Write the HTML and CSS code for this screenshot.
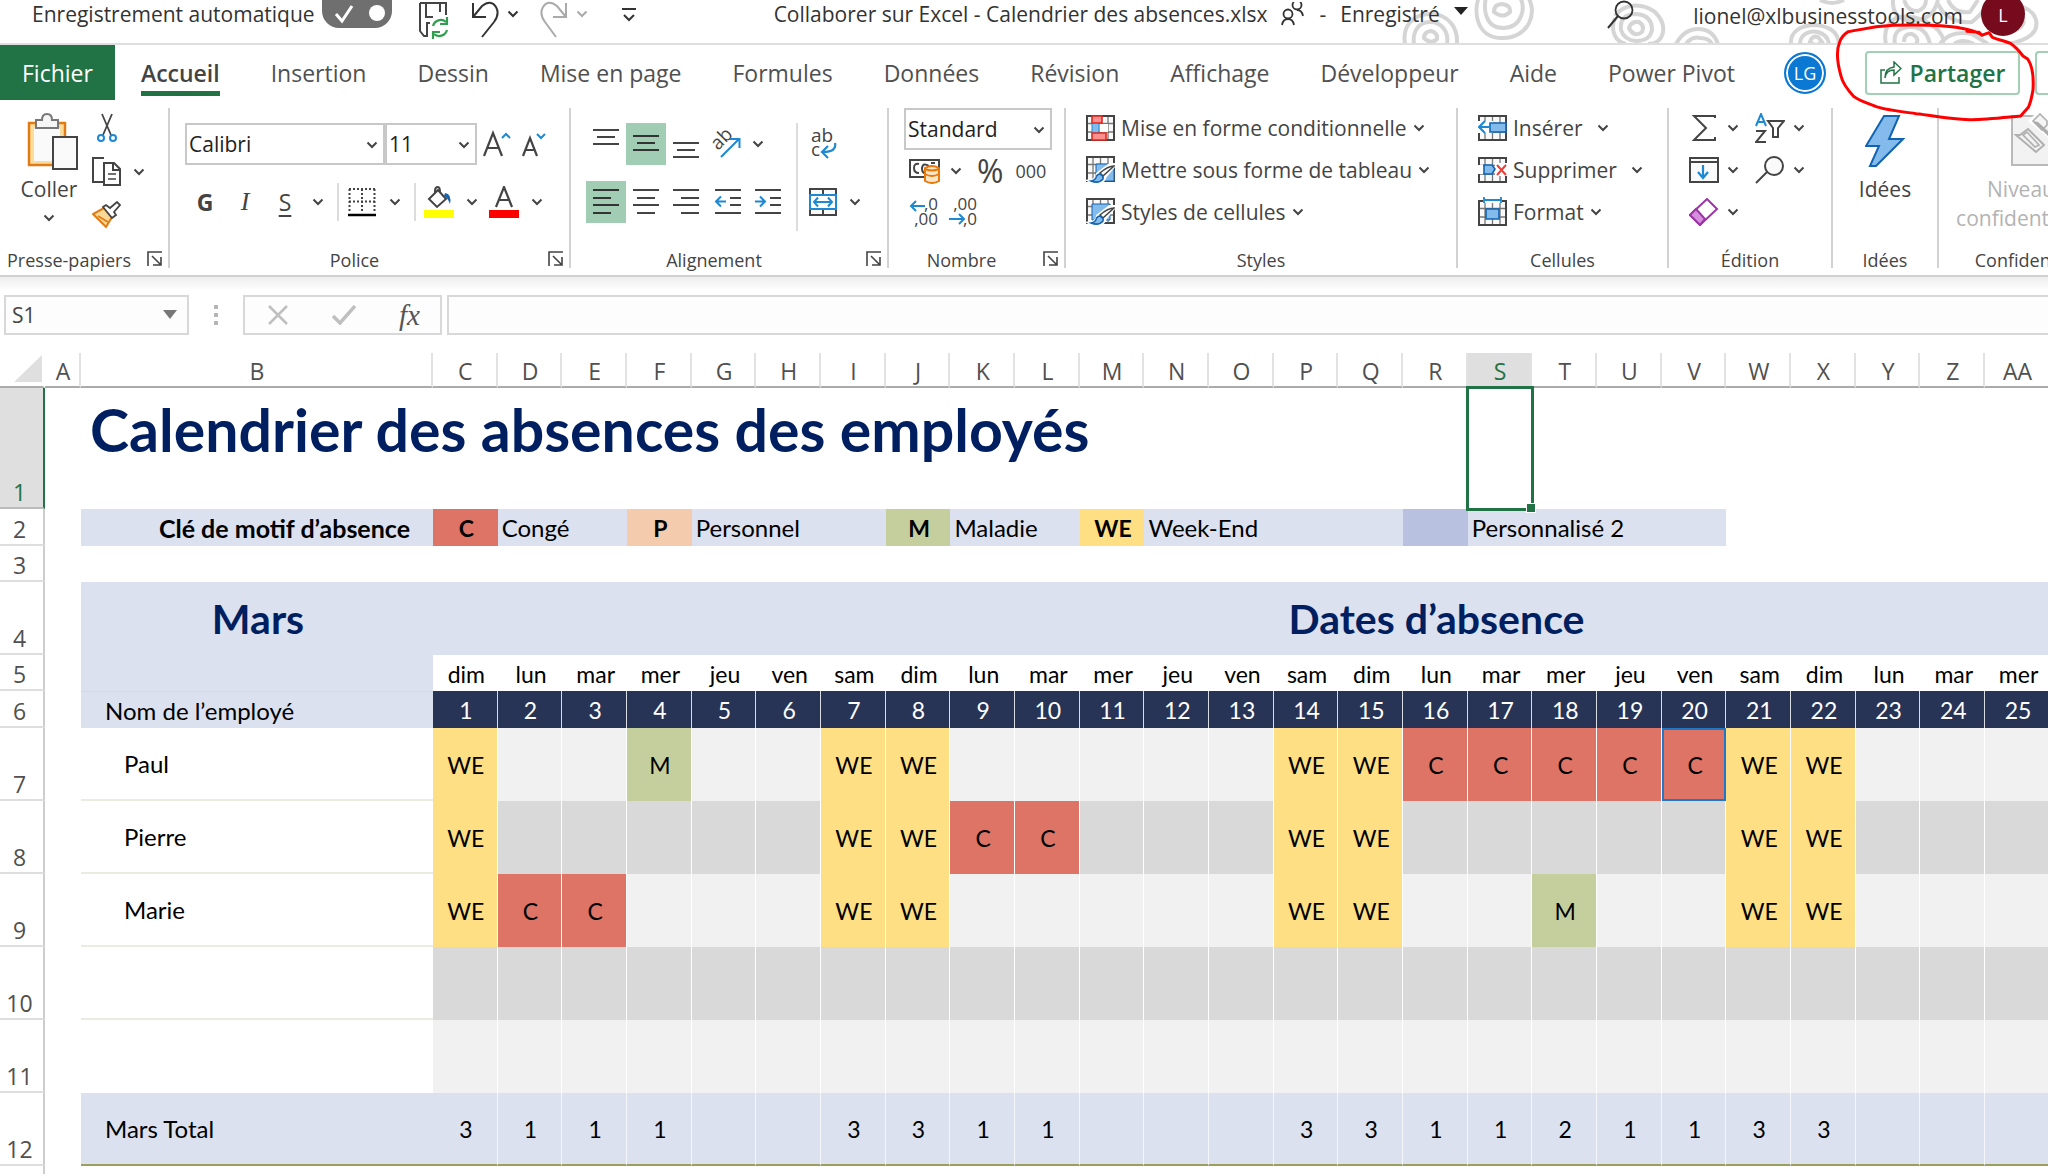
FILE: index.html
```html
<!DOCTYPE html>
<html lang="fr">
<head>
<meta charset="utf-8">
<title>Collaborer sur Excel - Calendrier des absences.xlsx</title>
<link rel="stylesheet" href="styles.css">
</head>
<body>
<svg class="defs" aria-hidden="true">
  <symbol id="chev" viewBox="0 0 12 8"><path d="M1.500 1.500L6 6L10.500 1.500" fill="none" stroke="currentColor" stroke-width="2"/></symbol>
  <symbol id="launch" viewBox="0 0 16 16"><path d="M1 15V1H15M5 5L13.500 13.500M14 6V14H6" fill="none" stroke="#444" stroke-width="1.600"/></symbol>
  <symbol id="grid" viewBox="0 0 29 26"><path d="M1 1H28V25H1Z" fill="#fafafa"/><path d="M1 8.500H28M1 17H28M7 1V25M14.500 1V25M22 1V25" stroke="#777" stroke-width="1.300"/><path d="M1 1H28V25H1Z" fill="none" stroke="#444" stroke-width="2"/></symbol>
  <symbol id="brush" viewBox="0 0 29 28"><path d="M28 9L19 20Q17 27 9 27L5 25Q11 24 12 18L24 9Z" fill="#fff" stroke="#fff" stroke-width="4"/><path d="M28 10L17 20L14 17Q22 10 28 10Z" fill="#fff" stroke="#444" stroke-width="1.600"/><path d="M14 18Q18 20 17 23Q13 28 5 25Q10 24 10.500 20Q12 18 14 18Z" fill="#83bbec" stroke="#1263b0" stroke-width="1.500"/></symbol>
</svg>

<header class="titlebar">
  <svg class="rings" viewBox="0 0 700 44" aria-hidden="true">
    <g fill="none" stroke="#d5d5d5" stroke-width="4">
      <path d="M57 44C54 26 65 14 82 14C101 14 110 28 109 44M66 44C64 30 72 22 82 22C94 22 101 32 99 44M76 38Q76 32 83 31Q90 33 89 39Q83 45 76 38Z"/>
      <path d="M134 -10C123 10 128 38 154 38C180 39 192 12 178 -6M139 -6C134 10 138 28 155 28C173 28 180 8 170 -6M146 12Q146 4 154 4Q163 5 162 12Q155 19 146 12Z"/>
      <path d="M267 16C275 4 293 2 307 12C321 26 316 44 300 44M267 18C262 30 267 42 278 44M273 30Q271 14 288 14Q304 15 304 30Q302 41 288 41Q276 40 273 30ZM281 28Q283 21 291 22Q297 26 294 32Q286 38 281 28Z"/>
      <path d="M328 44Q336 29 350 29Q365 29 370 44M338 44Q344 36 352 38Q361 38 364 44"/>
      <path d="M443 44C442 32 452 25 468 25C484 27 490 33 491 44M452 44C452 34 462 30 470 32Q480 35 481 44M462 42Q464 35 470 37L474 42Q468 48 462 42Z"/>
      <path d="M472 0Q484 6 496 0M545 0Q544 16 558 20Q584 24 590 0M556 0Q560 12 570 11Q578 8 578 0"/>
      <path d="M538 44Q534 26 548 18Q570 12 590 30Q598 40 594 44M547 44Q544 28 562 27Q578 26 582 44M556 42Q556 33 564 34Q572 38 568 44"/>
      <path d="M590 4Q600 24 624 22Q634 14 640 4M600 0Q606 14 622 12L630 0M592 44Q602 30 624 34L640 44M606 44Q614 38 626 44"/>
      <path d="M660 44Q692 38 688 20Q684 6 664 6M664 32Q680 26 674 16"/>
    </g>
  </svg>
  <label class="autosave" for="auto">Enregistrement automatique</label>
  <span class="toggle"><input type="checkbox" id="auto" checked><svg viewBox="0 0 70 36"><path d="M14 20L20 27L30 12" fill="none" stroke="#fff" stroke-width="3"/><circle cx="55" cy="19" r="8" fill="#fff"/></svg></span>
  <div class="quick">
    <button class="plain" aria-label="Enregistrer"><svg width="32" height="40" viewBox="0 0 32 40"><path d="M2 4H28V16M2 4V32L6 37H9V24H12M8 4V18H15M22 4V13" fill="none" stroke="#444" stroke-width="2"/><path d="M15 27A8 8 0 0 1 28 23M29 18V25H22M29 31A8 8 0 0 1 16 35M15 40V33H22" fill="none" stroke="#2f9e4f" stroke-width="2.200"/></svg></button>
    <button class="plain undo" aria-label="Annuler"><svg width="30" height="40" viewBox="0 0 30 40"><path d="M3 4V18H16M3 18L12 7Q21 0 26 8Q30 15 24 23L12 38" fill="none" stroke="#333" stroke-width="2"/></svg><svg class="chev"><use href="#chev"/></svg></button>
    <button class="plain redo" aria-label="Rétablir"><svg width="30" height="40" viewBox="0 0 30 40"><path d="M27 4V18H14M27 18L18 7Q9 0 4 8Q0 15 6 23L17 38" fill="none" stroke="#aaa" stroke-width="2"/></svg><svg class="chev"><use href="#chev"/></svg></button>
    <button class="plain" aria-label="Personnaliser"><svg width="14" height="16" viewBox="0 0 14 16"><path d="M0 2H14M2 8L7 13L12 8" fill="none" stroke="#333" stroke-width="2"/></svg></button>
  </div>
  <div class="docname">
    <span>Collaborer sur Excel - Calendrier des absences.xlsx</span>
    <svg width="24" height="24" viewBox="0 0 24 24"><g fill="none" stroke="#333" stroke-width="1.800"><circle cx="7" cy="12" r="4.500"/><path d="M1 23Q2 17 7 17Q12 17 13 23"/><circle cx="16" cy="3" r="4.500"/><path d="M16 8Q21 8 22 14"/></g></svg>
    <span>-</span>
    <span>Enregistré</span>
    <svg width="14" height="8" viewBox="0 0 14 8"><path d="M0 0H14L7 8Z" fill="#222"/></svg>
  </div>
  <button class="plain find" aria-label="Rechercher"><svg width="28" height="30" viewBox="0 0 28 30"><circle cx="17" cy="10" r="8.500" fill="none" stroke="#333" stroke-width="1.800"/><path d="M11 16L1 28" stroke="#333" stroke-width="2"/></svg></button>
  <span class="account">lionel@xlbusinesstools.com</span>
  <span class="face">L</span>
</header>

<nav class="tabs">
  <a href="#" class="file">Fichier</a>
  <a href="#" class="on">Accueil</a>
  <a href="#">Insertion</a>
  <a href="#">Dessin</a>
  <a href="#">Mise en page</a>
  <a href="#">Formules</a>
  <a href="#">Données</a>
  <a href="#">Révision</a>
  <a href="#">Affichage</a>
  <a href="#">Développeur</a>
  <a href="#">Aide</a>
  <a href="#">Power Pivot</a>
  <span class="guest">LG</span>
  <button class="share"><svg width="22" height="24" viewBox="0 0 22 24"><path d="M5 9H1V22H19V16M5 17Q6 9 14 9V14L21 7.500L14 1V6Q5 7 5 17Z" fill="none" stroke="#217346" stroke-width="1.500"/></svg>Partager</button>
  <button class="next" aria-label="Commentaires"></button>
</nav>
<svg class="mark" viewBox="880 60 621 321" aria-hidden="true"><path d="M1282 94L1318 97L1326 106L1348 98L1358 112C1385 122 1400 124 1412 130Q1430 142 1450 168L1464 177Q1484 205 1480 270Q1474 305 1466 322L1443 348C1380 354 1330 360 1290 359C1220 357 1180 346 1130 341C1070 333 1020 328 1000 316Q955 300 943 290Q910 255 904 228C893 190 890 150 900 126Q908 105 926 95C960 90 990 80 1060 76C1140 74 1220 76 1262 84Q1300 90 1326 104" fill="none" stroke="#f00" stroke-width="9" stroke-linejoin="round" stroke-linecap="round"/></svg>

<section class="ribbon">
  <div class="group g-clip">
    <div class="body">
      <button class="big"><svg width="52" height="58" viewBox="0 0 52 58"><path d="M2 10H38V52H2Z" fill="#fbdc9a" stroke="#e07b16" stroke-width="2.500"/><path d="M7 15H33V48H7Z" fill="#fafafa"/><path d="M9 15V7H15Q15 1 20 1Q25 1 25 7H31V15Z" fill="#f5f5f5" stroke="#777" stroke-width="2"/><path d="M26 24H50V56H26Z" fill="#fafafa" stroke="#444" stroke-width="2"/></svg><span>Coller</span><svg class="chev"><use href="#chev"/></svg></button>
      <div class="stack">
        <button class="plain" aria-label="Couper"><svg width="20" height="30" viewBox="0 0 20 30"><path d="M5 1L14 22M15 1L6 22" stroke="#444" stroke-width="1.800"/><circle cx="4" cy="25" r="3" fill="none" stroke="#1e88d2" stroke-width="2"/><circle cx="16" cy="25" r="3" fill="none" stroke="#1e88d2" stroke-width="2"/></svg></button>
        <button class="plain copy" aria-label="Copier"><svg width="30" height="30" viewBox="0 0 30 30"><path d="M12 1H1V25H11" fill="none" stroke="#444" stroke-width="2"/><path d="M12 6H22L28 12V28H12ZM21 6V13H28" fill="#fff" stroke="#444" stroke-width="2"/><path d="M16 17H24M16 22H24" stroke="#444" stroke-width="1.500"/></svg><svg class="chev"><use href="#chev"/></svg></button>
        <button class="plain" aria-label="Reproduire la mise en forme"><svg width="30" height="28" viewBox="0 0 30 28"><path d="M12 7L1 13L14 26L20 16Z" fill="#fbd894" stroke="#e07b16" stroke-width="2"/><path d="M6 15L16 21" stroke="#e07b16" stroke-width="1.500"/><path d="M11 6L14 4L18 7L25 1L28 4L22 11L24 14L20 17Z" fill="#fff" stroke="#444" stroke-width="1.800"/></svg></button>
      </div>
    </div>
    <div class="name"><span>Presse-papiers</span><svg class="launch"><use href="#launch"/></svg></div>
  </div>

  <div class="group g-font">
    <div class="body">
      <div class="line">
        <span class="combo w-font"><select aria-label="Police"><option>Calibri</option></select><svg class="chev"><use href="#chev"/></svg></span><span class="combo w-size"><select aria-label="Taille"><option>11</option></select><svg class="chev"><use href="#chev"/></svg></span>
        <button class="plain grow" aria-label="Agrandir"><svg width="30" height="30" viewBox="0 0 30 30"><path d="M1 27L10 4L19 27M4 19H16" fill="none" stroke="#444" stroke-width="2.200"/><path d="M19 9L23 5L27 9" fill="none" stroke="#1e88d2" stroke-width="2"/></svg></button>
        <button class="plain grow" aria-label="Réduire"><svg width="30" height="30" viewBox="0 0 30 30"><path d="M4 27L11 9L18 27M7 21H15" fill="none" stroke="#444" stroke-width="2.200"/><path d="M18 5L22 9L26 5" fill="none" stroke="#1e88d2" stroke-width="2"/></svg></button>
      </div>
      <div class="line">
        <button class="sq b">G</button><button class="sq i">I</button><button class="sq u">S</button><button class="drop" aria-label="Soulignements"><svg class="chev"><use href="#chev"/></svg></button>
        <i class="bar"></i>
        <button class="sq" aria-label="Bordures"><svg width="28" height="30" viewBox="0 0 28 30"><path d="M1.500 2V25M26.500 2V25M1 2H27M14 2V25M1 14.500H27" fill="none" stroke="#444" stroke-width="2" stroke-dasharray="2 2"/><path d="M0 28H28" stroke="#000" stroke-width="2.500"/></svg></button><button class="drop" aria-label="Types de bordure"><svg class="chev"><use href="#chev"/></svg></button>
        <i class="bar"></i>
        <button class="sq" aria-label="Remplissage"><svg width="30" height="32" viewBox="0 0 30 32"><path d="M0 24H30V32H0Z" fill="#ff0"/><path d="M5 13L14 4L22 13L13 21ZM11 7V5Q11 1 14 1Q16 1 16 6" fill="none" stroke="#444" stroke-width="2"/><path d="M21 7Q28 8 26 18Q24 12 20 10Z" fill="#1263b0"/></svg></button><button class="drop" aria-label="Couleurs de remplissage"><svg class="chev"><use href="#chev"/></svg></button>
        <button class="sq" aria-label="Couleur de police"><svg width="30" height="32" viewBox="0 0 30 32"><path d="M0 24H30V32H0Z" fill="#f00"/><path d="M7 21L15 1L23 21M10 14H20" fill="none" stroke="#444" stroke-width="2.200"/></svg></button><button class="drop" aria-label="Couleurs de police"><svg class="chev"><use href="#chev"/></svg></button>
      </div>
    </div>
    <div class="name"><span>Police</span><svg class="launch"><use href="#launch"/></svg></div>
  </div>

  <div class="group g-align">
    <div class="body">
      <div class="cols">
        <div>
          <div class="line">
            <button class="sq" aria-label="Haut"><svg width="26" height="30" viewBox="0 0 26 30"><path d="M0 1H26M4 8H22M0 15H26" stroke="#444" stroke-width="2"/></svg></button><button class="sq sel" aria-label="Milieu"><svg width="26" height="30" viewBox="0 0 26 30"><path d="M0 7H26M4 14H22M0 21H26" stroke="#333" stroke-width="2"/></svg></button><button class="sq" aria-label="Bas"><svg width="26" height="30" viewBox="0 0 26 30"><path d="M0 14H26M4 21H22M0 28H26" stroke="#444" stroke-width="2"/></svg></button>
            <button class="sq" aria-label="Orientation"><svg width="32" height="30" viewBox="0 0 32 30"><text x="0" y="0" transform="translate(8 22) rotate(-45)" class="ab">ab</text><path d="M11 28L29 10M20 10H29.500V19" fill="none" stroke="#1e88d2" stroke-width="2"/></svg></button><button class="drop" aria-label="Orientations"><svg class="chev"><use href="#chev"/></svg></button>
          </div>
          <div class="line">
            <button class="sq sel" aria-label="Gauche"><svg width="26" height="26" viewBox="0 0 26 26"><path d="M0 1H26M0 9H18M0 16H26M0 24H18" stroke="#333" stroke-width="2"/></svg></button><button class="sq" aria-label="Centre"><svg width="26" height="26" viewBox="0 0 26 26"><path d="M0 1H26M4 9H22M0 16H26M4 24H22" stroke="#444" stroke-width="2"/></svg></button><button class="sq" aria-label="Droite"><svg width="26" height="26" viewBox="0 0 26 26"><path d="M0 1H26M8 9H26M0 16H26M8 24H26" stroke="#444" stroke-width="2"/></svg></button><button class="sq ind" aria-label="Diminuer le retrait"><svg width="26" height="26" viewBox="0 0 26 26"><path d="M0 1H26M15 9H26M15 16H26M0 24H26" stroke="#444" stroke-width="2"/><path d="M11 12.500H1M6 7.500L1 12.500L6 17.500" fill="none" stroke="#1e88d2" stroke-width="2"/></svg></button><button class="sq" aria-label="Augmenter le retrait"><svg width="26" height="26" viewBox="0 0 26 26"><path d="M0 1H26M15 9H26M15 16H26M0 24H26" stroke="#444" stroke-width="2"/><path d="M0 12.500H10M5 7.500L10 12.500L5 17.500" fill="none" stroke="#1e88d2" stroke-width="2"/></svg></button>
          </div>
        </div>
        <i class="bar tall"></i>
        <div>
          <div class="line"><button class="sq" aria-label="Renvoyer à la ligne"><svg width="28" height="32" viewBox="0 0 28 32"><text x="2" y="14" class="ab">ab</text><text x="2" y="28" class="ab">c</text><path d="M26 15Q28 24 14 24M19 18L13 24L19 30" fill="none" stroke="#1e88d2" stroke-width="2.200"/></svg></button></div>
          <div class="line"><button class="sq" aria-label="Fusionner"><svg width="28" height="28" viewBox="0 0 28 28"><path d="M1 1H27V27H1ZM14 1V27" fill="#fafafa" stroke="#444" stroke-width="2"/><path d="M1 7H27V21H1Z" fill="#fff" stroke="#1e88d2" stroke-width="2"/><path d="M5 14H23M9 9.500L5 14L9 18.500M19 9.500L23 14L19 18.500" fill="none" stroke="#1e88d2" stroke-width="2"/></svg></button><button class="drop" aria-label="Options de fusion"><svg class="chev"><use href="#chev"/></svg></button></div>
        </div>
      </div>
    </div>
    <div class="name"><span>Alignement</span><svg class="launch"><use href="#launch"/></svg></div>
  </div>

  <div class="group g-num">
    <div class="body">
      <span class="combo w-num"><select aria-label="Format de nombre"><option>Standard</option></select><svg class="chev"><use href="#chev"/></svg></span>
      <div class="numline">
        <button class="plain" aria-label="Comptabilité"><svg width="32" height="26" viewBox="0 0 32 26"><path d="M1 2H30V19H1Z" fill="#fff" stroke="#444" stroke-width="2"/><path d="M10 6Q5 5 5 10Q5 15 10 15M20 8Q14 4 13 10Q13 15 16 15M22 5H26" fill="none" stroke="#444" stroke-width="2"/><path d="M16 10Q23 6 30 10V23Q23 27 16 23Z" fill="#fbe6c8" stroke="#e8780a" stroke-width="2"/><path d="M16 11Q23 14 30 11M16 16Q23 20 30 16" fill="none" stroke="#e8780a" stroke-width="2"/></svg></button>
        <button class="drop" aria-label="Devises"><svg class="chev"><use href="#chev"/></svg></button>
        <button class="plain pct">%</button>
        <button class="plain mil">000</button>
      </div>
      <div class="numline dec">
        <button class="plain" aria-label="Ajouter une décimale"><svg width="30" height="32" viewBox="0 0 30 32"><text x="29" y="13" class="dg">,0</text><text x="29" y="28" class="dg">,00</text><path d="M16 9H2M7 4L2 9L7 14" fill="none" stroke="#1e88d2" stroke-width="2"/></svg></button>
        <button class="plain" aria-label="Réduire les décimales"><svg width="30" height="32" viewBox="0 0 30 32"><text x="29" y="13" class="dg">,00</text><text x="29" y="28" class="dg">,0</text><path d="M1 22H16M11 17L16 22L11 27" fill="none" stroke="#1e88d2" stroke-width="2"/></svg></button>
      </div>
    </div>
    <div class="name"><span>Nombre</span><svg class="launch"><use href="#launch"/></svg></div>
  </div>

  <div class="group g-style">
    <div class="body rows">
      <button class="item"><svg width="29" height="26" viewBox="0 0 29 26"><use href="#grid"/><path d="M6 7H13V18H6Z" fill="#83bbec" stroke="#1e88d2"/><path d="M14 9H22V17H14Z" fill="#fff"/><path d="M6 1H16V8H6ZM6 18H20V25H6Z" fill="#ff8f8f" stroke="#e0281e" stroke-width="1.600"/></svg>Mise en forme conditionnelle<svg class="chev"><use href="#chev"/></svg></button>
      <button class="item"><svg width="29" height="28" viewBox="0 0 29 28"><use href="#grid" width="29" height="26"/><path d="M10 8H28V25H10Z" fill="#83bbec" stroke="#1263b0"/><use href="#brush"/></svg>Mettre sous forme de tableau<svg class="chev"><use href="#chev"/></svg></button>
      <button class="item"><svg width="29" height="28" viewBox="0 0 29 28"><use href="#grid" width="29" height="26"/><path d="M6 6H24V22H6Z" fill="#83bbec" stroke="#1263b0"/><use href="#brush"/></svg>Styles de cellules<svg class="chev"><use href="#chev"/></svg></button>
    </div>
    <div class="name"><span>Styles</span></div>
  </div>

  <div class="group g-cell">
    <div class="body rows">
      <button class="item wide"><svg width="29" height="26" viewBox="0 0 29 26"><use href="#grid"/><path d="M0 6H15V18H0Z" fill="#fff"/><path d="M12 8H28V17H12Z" fill="#83bbec" stroke="#1263b0" stroke-width="1.600"/><path d="M13 12H2M7 6L1 12L7 18" fill="none" stroke="#1e88d2" stroke-width="2.200"/></svg>Insérer<svg class="chev"><use href="#chev"/></svg></button>
      <button class="item wide"><svg width="29" height="26" viewBox="0 0 29 26"><use href="#grid"/><path d="M0 8H5V17H0ZM17 6H29V19H17Z" fill="#fff"/><path d="M6 8H14L17 12L14 17H6Z" fill="#83bbec" stroke="#1263b0" stroke-width="1.600"/><path d="M19 8L28 18M28 8L19 18" stroke="#e8413a" stroke-width="2"/></svg>Supprimer<svg class="chev"><use href="#chev"/></svg></button>
      <button class="item"><svg width="29" height="30" viewBox="0 0 29 30"><use href="#grid" y="3" width="29" height="26"/><path d="M5 0H24V6H5Z" fill="#fff"/><path d="M8 12H21V22H8Z" fill="#83bbec" stroke="#1263b0" stroke-width="1.600"/><path d="M6 3H23M6 0V6M23 0V6" stroke="#1e88d2" stroke-width="1.800"/></svg>Format<svg class="chev"><use href="#chev"/></svg></button>
    </div>
    <div class="name"><span>Cellules</span></div>
  </div>

  <div class="group g-edit">
    <div class="body rows">
      <div class="pair">
        <button class="plain" aria-label="Somme"><svg width="30" height="28" viewBox="0 0 30 28"><path d="M26 4V2H5L17 14L5 26H26V23" fill="none" stroke="#444" stroke-width="2"/></svg><svg class="chev"><use href="#chev"/></svg></button>
        <button class="plain" aria-label="Trier et filtrer"><svg width="30" height="30" viewBox="0 0 30 30"><path d="M1 13L6 1L11 13M3 9H9" fill="none" stroke="#1e88d2" stroke-width="2"/><path d="M1 18H10L1 29H11" fill="none" stroke="#444" stroke-width="2"/><path d="M13 8H29L23 15V24H18V15Z" fill="none" stroke="#444" stroke-width="2"/></svg><svg class="chev"><use href="#chev"/></svg></button>
      </div>
      <div class="pair">
        <button class="plain" aria-label="Recopier"><svg width="30" height="28" viewBox="0 0 30 28"><path d="M1 2H29V26H1ZM1 6H29" fill="#fafafa" stroke="#444" stroke-width="2"/><path d="M14 9V21M9 16L14 22L19 16" fill="none" stroke="#1e88d2" stroke-width="2.200"/></svg><svg class="chev"><use href="#chev"/></svg></button>
        <button class="plain" aria-label="Rechercher et sélectionner"><svg width="30" height="28" viewBox="0 0 30 28"><circle cx="19" cy="10" r="9" fill="#fafafa" stroke="#444" stroke-width="2"/><path d="M12 16L1 27" stroke="#444" stroke-width="2"/></svg><svg class="chev"><use href="#chev"/></svg></button>
      </div>
      <div class="pair">
        <button class="plain" aria-label="Effacer"><svg width="30" height="28" viewBox="0 0 30 28"><path d="M1 17L18 1L28 11L11 27Z" fill="#fff" stroke="#9b35a5" stroke-width="2"/><path d="M1 17L7 11L16 21L11 27Z" fill="#d68fdc" stroke="#9b35a5" stroke-width="2"/></svg><svg class="chev"><use href="#chev"/></svg></button>
      </div>
    </div>
    <div class="name"><span>Édition</span></div>
  </div>

  <div class="group g-idea">
    <div class="body"><button class="big"><svg width="40" height="58" viewBox="0 0 40 58"><path d="M19 3H34L24 26H38L11 53H5L14 33H1Z" fill="#83bbec" stroke="#1263b0" stroke-width="2"/></svg><span>Idées</span></button></div>
    <div class="name"><span>Idées</span></div>
  </div>

  <div class="group g-conf">
    <div class="body"><button class="big off" disabled><svg width="52" height="58" viewBox="0 0 52 58"><path d="M1 3H51V52H1Z" fill="#f2f2f2" stroke="#b9b9b9" stroke-width="2"/><path d="M11 22L19 16L35 32L27 39L7 22Z" fill="#f2f2f2" stroke="#b0b0b0" stroke-width="2" transform="translate(-2 0)"/><path d="M12 22L16 19L28 32L24 34Z" fill="none" stroke="#b0b0b0" stroke-width="1.600"/><path d="M20 8L30 -2L52 20V34Z" fill="#f2f2f2" stroke="#fff" stroke-width="4"/><path d="M22 8L29 1L36 8V12L31 17Z" fill="#f5f5f5" stroke="#b0b0b0" stroke-width="1.600"/><path d="M22 8L27 9L52 32V38Z" fill="#ababab"/></svg><span>Niveau</span><span>confidentialité</span></button></div>
    <div class="name"><span>Confidentialité</span></div>
  </div>
</section>

<div class="fbar">
  <div class="box namebox"><input value="S1" aria-label="Zone Nom"><svg width="14" height="9" viewBox="0 0 14 9"><path d="M0 0H14L7 9Z" fill="#777"/></svg></div>
  <svg class="dots" width="4" height="20" viewBox="0 0 4 20"><path d="M0 0H4V4H0ZM0 8H4V12H0ZM0 16H4V20H0Z" fill="#b5b5b5"/></svg>
  <div class="box tools">
    <button class="plain" aria-label="Annuler la saisie"><svg width="22" height="20" viewBox="0 0 22 20"><path d="M2 1L20 19M20 1L2 19" stroke="#bfbfbf" stroke-width="2.500"/></svg></button>
    <button class="plain" aria-label="Entrer"><svg width="24" height="20" viewBox="0 0 24 20"><path d="M1 11L8 18L23 1" fill="none" stroke="#bfbfbf" stroke-width="3.500"/></svg></button>
    <button class="plain fx">fx</button>
  </div>
  <input class="box formula" aria-label="Barre de formule">
</div>

<main class="sheet">
<table>
  <colgroup><col class="c-n"><col class="c-a"><col class="c-b"><col span="25"></colgroup>
  <thead><tr><th class="corner"><svg width="28" height="28" viewBox="0 0 28 28"><path d="M28 0V27H0Z" fill="#dfdfdf"/></svg></th><th>A</th><th>B</th><th>C</th><th>D</th><th>E</th><th>F</th><th>G</th><th>H</th><th>I</th><th>J</th><th>K</th><th>L</th><th>M</th><th>N</th><th>O</th><th>P</th><th>Q</th><th>R</th><th class="cur">S</th><th>T</th><th>U</th><th>V</th><th>W</th><th>X</th><th>Y</th><th>Z</th><th>AA</th></tr></thead>
  <tbody>
  <tr class="r1"><th class="cur">1</th><td></td><td colspan="17" class="title">Calendrier des absences des employés</td><td class="active"><span class="cursor"></span></td><td colspan="8"></td></tr>
  <tr class="r2"><th>2</th><td></td><td class="f key">Clé de motif d’absence</td><td class="c">C</td><td class="f" colspan="2">Congé</td><td class="p">P</td><td class="f" colspan="3">Personnel</td><td class="m">M</td><td class="f" colspan="2">Maladie</td><td class="w">WE</td><td class="f" colspan="4">Week-End</td><td class="k"></td><td class="f" colspan="4">Personnalisé 2</td><td colspan="5"></td></tr>
  <tr class="r3"><th>3</th><td colspan="27"></td></tr>
  <tr class="r4"><th>4</th><td></td><td class="month">Mars</td><td colspan="25" class="dates">Dates d’absence</td></tr>
  <tr class="r5"><th>5</th><td></td><td class="f"></td><td>dim</td><td>lun</td><td>mar</td><td>mer</td><td>jeu</td><td>ven</td><td>sam</td><td>dim</td><td>lun</td><td>mar</td><td>mer</td><td>jeu</td><td>ven</td><td>sam</td><td>dim</td><td>lun</td><td>mar</td><td>mer</td><td>jeu</td><td>ven</td><td>sam</td><td>dim</td><td>lun</td><td>mar</td><td>mer</td></tr>
  <tr class="r6"><th>6</th><td></td><td class="f lab">Nom de l’employé</td><td>1</td><td>2</td><td>3</td><td>4</td><td>5</td><td>6</td><td>7</td><td>8</td><td>9</td><td>10</td><td>11</td><td>12</td><td>13</td><td>14</td><td>15</td><td>16</td><td>17</td><td>18</td><td>19</td><td>20</td><td>21</td><td>22</td><td>23</td><td>24</td><td>25</td></tr>
  <tr class="day"><th>7</th><td></td><td class="who">Paul</td><td class="w">WE</td><td></td><td></td><td class="m">M</td><td></td><td></td><td class="w">WE</td><td class="w">WE</td><td></td><td></td><td></td><td></td><td></td><td class="w">WE</td><td class="w">WE</td><td class="c">C</td><td class="c">C</td><td class="c">C</td><td class="c">C</td><td class="c peer">C</td><td class="w">WE</td><td class="w">WE</td><td></td><td></td><td></td></tr>
  <tr class="day alt"><th>8</th><td></td><td class="who">Pierre</td><td class="w">WE</td><td></td><td></td><td></td><td></td><td></td><td class="w">WE</td><td class="w">WE</td><td class="c">C</td><td class="c">C</td><td></td><td></td><td></td><td class="w">WE</td><td class="w">WE</td><td></td><td></td><td></td><td></td><td></td><td class="w">WE</td><td class="w">WE</td><td></td><td></td><td></td></tr>
  <tr class="day"><th>9</th><td></td><td class="who">Marie</td><td class="w">WE</td><td class="c">C</td><td class="c">C</td><td></td><td></td><td></td><td class="w">WE</td><td class="w">WE</td><td></td><td></td><td></td><td></td><td></td><td class="w">WE</td><td class="w">WE</td><td></td><td></td><td class="m">M</td><td></td><td></td><td class="w">WE</td><td class="w">WE</td><td></td><td></td><td></td></tr>
  <tr class="day alt"><th>10</th><td></td><td class="who"></td><td></td><td></td><td></td><td></td><td></td><td></td><td></td><td></td><td></td><td></td><td></td><td></td><td></td><td></td><td></td><td></td><td></td><td></td><td></td><td></td><td></td><td></td><td></td><td></td><td></td></tr>
  <tr class="day"><th>11</th><td></td><td class="who end"></td><td></td><td></td><td></td><td></td><td></td><td></td><td></td><td></td><td></td><td></td><td></td><td></td><td></td><td></td><td></td><td></td><td></td><td></td><td></td><td></td><td></td><td></td><td></td><td></td><td></td></tr>
  <tr class="total"><th>12</th><td></td><td class="lab">Mars Total</td><td>3</td><td>1</td><td>1</td><td>1</td><td></td><td></td><td>3</td><td>3</td><td>1</td><td>1</td><td></td><td></td><td></td><td>3</td><td>3</td><td>1</td><td>1</td><td>2</td><td>1</td><td>1</td><td>3</td><td>3</td><td></td><td></td><td></td></tr>
  <tr class="rest"><th></th><td colspan="27"></td></tr>
  </tbody>
</table>
</main>
</body>
</html>
```
FILE: styles.css
```css
* { box-sizing: border-box; }
body {
  margin: 0;
  height: 100vh;
  display: flex;
  flex-direction: column;
  position: relative;
  overflow: hidden;
  background: #fff;
  color: #444;
  font-family: "Open Sans", "Noto Sans", sans-serif;
  font-size: 21px;
  line-height: 28px;
}
button, select, input { font: inherit; color: inherit; margin: 0; border-radius: 0; }
button { background: none; border: 0; padding: 0; white-space: nowrap; }
svg { display: block; flex: none; }
.defs { position: absolute; width: 0; height: 0; }
.chev { width: 12px; height: 8px; }
.plain { display: flex; align-items: center; }

/* Title bar */
.titlebar {
  position: relative;
  flex: none;
  display: flex;
  align-items: flex-start;
  height: 45px;
  padding-left: 32px;
  border-bottom: 2px solid #dedede;
  color: #333;
  white-space: nowrap;
  overflow: hidden;
}
.titlebar > * { position: relative; }
.titlebar .rings { position: absolute; top: 0; right: 0; width: 700px; height: 44px; }
.toggle { width: 70px; height: 28px; margin-left: 7px; border-radius: 0 0 17px 17px; background: #6f6f6f; }
.toggle input { position: absolute; opacity: 0; }
.toggle svg { position: absolute; top: -6px; left: 0; width: 70px; height: 36px; }
.quick { display: flex; align-items: center; height: 38px; margin-left: 26px; gap: 20px; }
.quick .chev { margin-left: 7px; }
.redo { color: #aaa; margin-right: 14px; }
.redo .chev, .undo .chev { margin-top: -10px; }
.quick > :last-child { margin-top: -8px; }
.docname { display: flex; align-items: center; margin-left: 138px; gap: 14px; }
.docname > :last-child { margin-top: -6px; }
.find { margin-left: auto; }
.account { margin: 2px 18px 0 58px; }
.face {
  width: 44px; height: 44px; margin: -8px 23px 0 0;
  border-radius: 50%; background: #750b1c; color: #fff;
  font-size: 18px; line-height: 46px; text-align: center;
}

/* Tabs */
.tabs { flex: none; display: flex; align-items: center; gap: 1px; height: 55px; font-size: 23px; white-space: nowrap; }
.tabs a { color: #505050; text-decoration: none; padding: 2px 25px 0; line-height: 53px; }
.tabs .file { background: #217346; color: #fff; padding: 2px 22px 0; }
.tabs .on { font-weight: 600; color: #444; background: linear-gradient(#217346, #217346) no-repeat center 46px / calc(100% - 50px) 5px; }
.guest {
  width: 42px; height: 42px; margin-left: auto; border-radius: 50%;
  border: 2px solid #0b78d4; background: #0b78d4; box-shadow: inset 0 0 0 2px #fff;
  color: #fff; font-size: 18px; line-height: 39px; text-align: center;
}
.share {
  display: flex; align-items: center; justify-content: center; gap: 8px;
  width: 155px; height: 44px; margin-left: 38px;
  border: 2px solid #a3d0b5; border-radius: 4px; background: #fff;
  color: #217346; font-weight: 600; font-size: 23px;
}
.next { width: 13px; height: 44px; margin-left: 14px; border: 2px solid #a3d0b5; border-right: 0; border-radius: 4px 0 0 4px; }
.mark { position: absolute; z-index: 2; top: 20px; right: 8px; width: 207px; height: 107px; }

/* Ribbon */
.ribbon {
  flex: none; display: flex; height: 177px; padding-top: 8px; overflow: hidden;
  border-bottom: 2px solid #d0d0d0;
}
.group { flex: none; display: flex; flex-direction: column; height: 160px; border-right: 2px solid #d2d2d2; }
.g-clip { width: 170px; }
.g-font { width: 401px; }
.g-align { width: 318px; }
.g-num { width: 177px; }
.g-style { width: 392px; }
.g-cell { width: 211px; }
.g-edit { width: 164px; }
.g-idea { width: 106px; }
.g-conf { width: 180px; border: 0; }
.body { flex: 1; }
.name { position: relative; font-size: 18px; line-height: 20px; height: 18px; text-align: center; }
.launch { position: absolute; right: 5px; top: 1px; width: 16px; height: 16px; }
.g-clip .name span, .g-font .name span, .g-align .name span, .g-num .name span { margin-right: 30px; }
.g-conf .name { padding-left: 14px; }

.g-clip .body { display: flex; }
.big { display: flex; flex-direction: column; align-items: center; padding-top: 5px; }
.big span { margin-top: 4px; }
.big .chev { margin-top: 11px; }
.g-clip .big { width: 58px; margin-left: 20px; }
.g-clip .big > :first-child { margin-left: 8px; }
.stack { display: flex; flex-direction: column; align-items: flex-start; gap: 14px; padding: 5px 0 0 14px; }
.stack > :first-child { padding-left: 5px; }
.copy { gap: 11px; }

.g-font .body, .g-align .body { padding: 15px 0 0 15px; }
.line { display: flex; align-items: center; height: 42px; margin-bottom: 16px; }
.sq { display: flex; align-items: center; justify-content: center; width: 40px; height: 42px; }
.sel { background: #a0cdb4; }
.b { font-weight: 700; font-size: 23px; }
.i { font-family: "Liberation Serif", serif; font-style: italic; font-size: 26px; }
.u { text-decoration: underline; text-underline-offset: 4px; font-size: 23px; }
.drop { display: flex; align-items: center; justify-content: center; width: 24px; height: 42px; }
.bar { width: 2px; height: 38px; background: #dcdcdc; }
.g-font .bar { margin: 0 3px 0 7px; }
.g-font .line .drop { margin-left: 1px; }
.tall { height: 108px; margin: 0 5px 0 8px; }
.cols { display: flex; }
.ind { margin-left: 2px; }
.line .grow { margin-left: 6px; }

.combo { position: relative; display: flex; height: 42px; border: 2px solid #c8c8c8; background: #fff; color: #222; }
.combo select { appearance: none; width: 100%; border: 0; padding: 0 2px; background: none; }
.combo .chev { position: absolute; right: 5px; top: 16px; color: #444; }
.w-font { width: 200px; }
.w-size { width: 92px; }
.w-num { width: 148px; }

.g-num .body { padding-left: 15px; }
.numline { display: flex; align-items: center; height: 42px; padding-left: 5px; }
.numline .drop { margin-left: 3px; }
.pct { font-size: 32px; margin-left: 9px; }
.mil { font-size: 18px; margin-left: 12px; }
.dec { gap: 9px; }
.dg { font-size: 17px; text-anchor: end; fill: #444; }
.ab { font-size: 19px; fill: #444; }

.rows { display: flex; flex-direction: column; }
.item { display: flex; align-items: center; gap: 6px; height: 42px; margin-top: -1px; margin-bottom: 1px; }
.item .chev { margin-left: 0; }
.wide .chev { margin-left: 8px; }
.g-style .rows, .g-cell .rows { padding-left: 20px; }
.pair { display: flex; gap: 16px; height: 42px; padding-left: 20px; }
.pair .chev { margin-left: 8px; }
.pair button { margin-top: -3px; }
.g-idea .big { width: 104px; }
.off { width: 174px; color: #b3b3b3; }
.off svg { margin-left: 22px; }
.off span:nth-child(2) { margin-right: 10px; }
.off span + span { margin-top: 1px; }

/* Formula bar */
.fbar {
  flex: none; display: flex; align-items: center; height: 76px; padding: 0 0 1px 4px;
  background: linear-gradient(#eee, #fff 14px);
}
.box { height: 40px; border: 2px solid #d8d8d8; background: #fdfdfd; }
.namebox { display: flex; align-items: center; width: 185px; padding: 0 10px 0 6px; }
.namebox input { width: 100%; min-width: 0; border: 0; padding: 0; background: none; }
.dots { margin: 0 25px; }
.tools { display: flex; align-items: center; justify-content: space-between; width: 199px; padding: 0 20px 0 22px; }
.fx { font: italic 29px/32px "Liberation Serif", serif; color: #555; }
.formula { flex: 1; min-width: 0; margin-left: 5px; border-right: 0; }

/* Sheet */
.sheet { flex: 1; min-height: 0; overflow: hidden; }
table {
  width: calc(100% + 2px); table-layout: fixed; border-collapse: separate; border-spacing: 0;
  font-family: Lato, sans-serif; font-size: 23px; color: #000;
}
.c-n { width: 45px; }
.c-a { width: 36px; }
.c-b { width: 352px; }
th, td { padding: 0; white-space: nowrap; }
th { font-family: "Open Sans", sans-serif; font-weight: 400; font-size: 23px; color: #505050; vertical-align: bottom; }
thead th { height: 35px; padding: 0 0 1px 2px; border-right: 2px solid #e2e2e2; border-bottom: 2px solid #ababab; }
thead .cur { background: #dfdfdf; color: #217346; }
.corner svg { margin: 0 0 2px 12px; }
thead .corner { border-right-color: #fff; }
tbody th { padding: 0 4px 1px 0; border-right: 2px solid #cdcdcd; border-bottom: 2px solid #dedede; }
tbody .cur { background: #dfdfdf; color: #217346; border-right-color: #217346; border-bottom-color: #bbb; }
.r1 { height: 121px; }
.r2, .r6 { height: 37px; }
.r3, .r5 { height: 36px; }
.r4, .day, .total { height: 73px; }
td { text-align: center; padding: 1px 0 0 2px; }
.f, .lab, .month, .dates { background: #dbe1ee; }
.title { text-align: left; vertical-align: top; padding: 0 0 0 9px; color: #001f60; font-weight: 700; font-size: 59px; line-height: 84px; }
.r2 .f { text-align: left; padding-left: 4px; font-size: 24px; }
.r2 .key { text-align: right; padding-right: 23px; font-weight: 700; font-size: 25px; }
.r2 .c, .r2 .p, .r2 .m, .r2 .w { font-weight: 700; }
.month, .dates { color: #001f60; font-weight: 700; font-size: 41px; line-height: 44px; }
.dates { padding-left: 390px; }
td.lab { text-align: left; padding-left: 24px; font-size: 24px; }
.r6 .f { border-top: 1px solid #d5d9e0; }
.r6 td:nth-child(n+4) { background: #283456; color: #fff; border-right: 1px solid #d8dbe2; }
.who { text-align: left; padding-left: 43px; border-bottom: 2px solid #eaecdf; font-size: 24px; }
.end { border-bottom: 0; }
.day td:nth-child(n+4) { background: #f1f1f1; border-right: 1px solid #fff; }
.alt td:nth-child(n+4) { background: #d9d9d9; }
tr .c, .day td.c:nth-child(n+4) { background: #dd7466; }
tr .m, .day td.m:nth-child(n+4) { background: #c4cf9d; }
tr .w, .day td.w:nth-child(n+4) { background: #ffdf84; }
tr .p { background: #f4cbac; }
tr .k { background: #b8c1e0; }
.day td.peer:nth-child(n+4) { outline: 2px solid #1f77c8; outline-offset: -2px; border: 0; }
.total td:nth-child(n+3) { background: #dbe1ee; border-bottom: 2px solid #9ca05f; }
.total td:nth-child(n+4) { border-right: 1px solid #f4f6fa; }
.active { position: relative; }
.cursor { position: absolute; inset: -2px; border: 3px solid #217346; }
.cursor::after { content: ""; position: absolute; right: -4px; bottom: -4px; width: 8px; height: 8px; background: #217346; outline: 1px solid #fff; }
.rest { height: 40px; }
```
